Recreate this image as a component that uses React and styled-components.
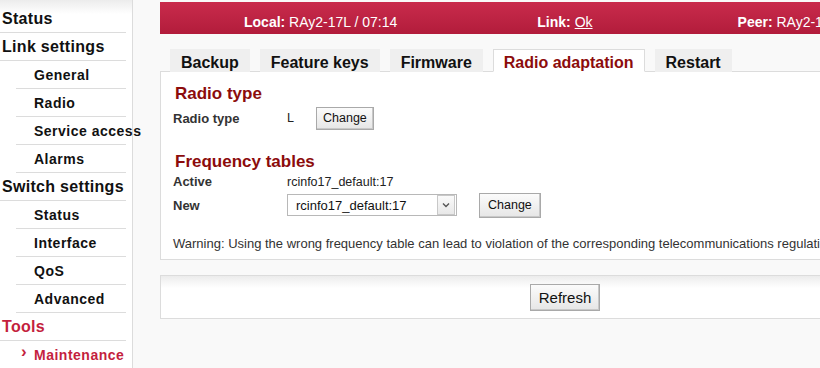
import React from 'react'
import styled, { createGlobalStyle } from 'styled-components'

const Global = createGlobalStyle`
  html, body {
    margin: 0;
    padding: 0;
    background: #f9f9f9;
    font-family: "Liberation Sans", Arial, sans-serif;
    overflow: hidden;
  }
`

const Layout = styled.div`
  display: flex;
  align-items: flex-start;
  width: 820px;
  height: 368px;
  overflow: hidden;
`

const Sidebar = styled.nav`
  flex: none;
  width: 126px;
  height: 368px;
  padding: 5px 6px 0 0;
  background: linear-gradient(to bottom, #ececec 0, #ffffff 14px);
  border-right: 1px solid #dcdcdc;
`

const NavItem = styled.div`
  height: 27px;
  display: flex;
  align-items: center;
  white-space: nowrap;
  border-bottom: 1px solid #dcdcdc;
  margin-left: ${p => (p.sub ? '16px' : '0')};
  padding-left: ${p => (p.sub ? '18px' : '2px')};
  font-size: ${p => (p.sub ? '14px' : '16px')};
  letter-spacing: ${p => (p.sub ? '0.5px' : '0.3px')};
  font-weight: bold;
  color: ${p => (p.active ? '#c41f3e' : '#111')};
  position: relative;
`

const Marker = styled.span`
  position: absolute;
  left: 5px;
  top: 1px;
  font-size: 17px;
  line-height: 20px;
  color: #c41f3e;
`

const Main = styled.div`
  flex: none;
  width: 810px;
  margin-left: 27px;
`

const Header = styled.div`
  margin-top: 2px;
  height: 32px;
  box-sizing: border-box;
  padding: 12px 0 0 84px;
  display: flex;
  background: linear-gradient(to bottom, #c92b4c, #b21c3b);
  color: #fff;
  font-size: 14px;
  white-space: nowrap;
  overflow: hidden;
`

const HeadItem = styled.span`
  margin-left: ${p => p.ml || '0'};
`

const HeadLabel = styled.b`
  font-weight: bold;
`

const Under = styled.span`
  text-decoration: underline;
`

const Tabs = styled.div`
  display: flex;
  gap: 10px;
  padding: 15px 0 0 10px;
  margin-bottom: -1px;
  position: relative;
`

const Tab = styled.div`
  height: 23px;
  box-sizing: border-box;
  padding: 4px 10px 0;
  font-size: 16px;
  font-weight: bold;
  color: ${p => (p.active ? '#8c0c0c' : '#111')};
  background: ${p => (p.active ? '#fff' : '#efefef')};
  border: 1px solid ${p => (p.active ? '#dcdcdc' : '#efefef')};
  border-bottom-color: ${p => (p.active ? '#fff' : '#efefef')};
`

const Panel = styled.div`
  background: #fff;
  border: 1px solid #dcdcdc;
  padding: 12px 12px 0;
  height: 175px;
`

const SectionTitle = styled.h2`
  margin: ${p => p.top || 0} 0 0 2px;
  font-size: 17px;
  font-weight: bold;
  color: #8c0c0c;
  line-height: 20px;
`

const Row = styled.div`
  display: flex;
  align-items: center;
  height: ${p => p.h || '24px'};
  font-size: 13px;
  color: #222;
`

const Label = styled.div`
  width: 114px;
  font-weight: bold;
  color: #333;
`

const Value = styled.div`
  width: ${p => p.w || 'auto'};
  color: #222;
  font-size: 12.5px;
`

const Button = styled.button`
  font-family: "Liberation Sans", Arial, sans-serif;
  font-size: ${p => p.size || '12.5px'};
  color: #111;
  height: ${p => p.h || '23px'};
  padding: 0 ${p => p.px || '8px'};
  border: 1px solid #a9a9a9;
  border-radius: 0;
  background: linear-gradient(to bottom, #fbfbfb, #e6e6e6);
  box-shadow: inset -1px -1px 0 #c8c8c8;
`

const Select = styled.div`
  width: 170px;
  height: 22px;
  box-sizing: border-box;
  border: 1px solid #b8b8b8;
  display: flex;
  align-items: center;
  font-size: 13px;
  color: #111;
  padding-left: 8px;
  margin-right: 22px;
`

const SelectText = styled.span`
  flex: 1;
`

const Arrow = styled.span`
  width: 16px;
  height: 18px;
  margin-right: 1px;
  border: 1px solid #c8c8c8;
  background: linear-gradient(to bottom, #fafafa, #e8e8e8);
  display: flex;
  align-items: center;
  justify-content: center;
`

const Warning = styled.div`
  margin-top: 17px;
  font-size: 13px;
  color: #333;
  white-space: nowrap;
`

const Footer = styled.div`
  margin-top: 15px;
  height: 42px;
  border: 1px solid #dcdcdc;
  background: linear-gradient(to bottom, #ececec 0, #ffffff 12px);
  display: flex;
  align-items: center;
  justify-content: center;
`

const nav = [
  { t: 'Status' },
  { t: 'Link settings' },
  { t: 'General', sub: true },
  { t: 'Radio', sub: true },
  { t: 'Service access', sub: true },
  { t: 'Alarms', sub: true },
  { t: 'Switch settings' },
  { t: 'Status', sub: true },
  { t: 'Interface', sub: true },
  { t: 'QoS', sub: true },
  { t: 'Advanced', sub: true },
  { t: 'Tools', active: true },
  { t: 'Maintenance', sub: true, active: true, marker: true },
]

const tabs = ['Backup', 'Feature keys', 'Firmware', 'Radio adaptation', 'Restart']

export default function App() {
  return (
    <>
      <Global />
      <Layout>
        <Sidebar>
          {nav.map((n, i) => (
            <NavItem key={i} sub={n.sub} active={n.active}>
              {n.marker && <Marker>›</Marker>}
              {n.t}
            </NavItem>
          ))}
        </Sidebar>
        <Main>
          <Header>
            <HeadItem><HeadLabel>Local:</HeadLabel> RAy2-17L / 07:14</HeadItem>
            <HeadItem ml="140px"><HeadLabel>Link:</HeadLabel> <Under>Ok</Under></HeadItem>
            <HeadItem ml="145px"><HeadLabel>Peer:</HeadLabel> RAy2-17H / 07:14</HeadItem>
          </Header>
          <Tabs>
            {tabs.map(t => (
              <Tab key={t} active={t === 'Radio adaptation'}>{t}</Tab>
            ))}
          </Tabs>
          <Panel>
            <SectionTitle>Radio type</SectionTitle>
            <Row h="28px">
              <Label>Radio type</Label>
              <Value w="29px">L</Value>
              <Button px="6px">Change</Button>
            </Row>
            <SectionTitle top="20px">Frequency tables</SectionTitle>
            <Row h="19px">
              <Label>Active</Label>
              <Value>rcinfo17_default:17</Value>
            </Row>
            <Row h="28px">
              <Label>New</Label>
              <Select>
                <SelectText>rcinfo17_default:17</SelectText>
                <Arrow>
                  <svg width="8" height="6" viewBox="0 0 8 6">
                    <path d="M1 1.5 L4 4.5 L7 1.5" fill="none" stroke="#555" strokeWidth="1.4" />
                  </svg>
                </Arrow>
              </Select>
              <Button h="25px" px="8px">Change</Button>
            </Row>
            <Warning>
              Warning: Using the wrong frequency table can lead to violation of the corresponding telecommunications regulations.
            </Warning>
          </Panel>
          <Footer>
            <Button size="15px" h="27px" px="8px">Refresh</Button>
          </Footer>
        </Main>
      </Layout>
    </>
  )
}
